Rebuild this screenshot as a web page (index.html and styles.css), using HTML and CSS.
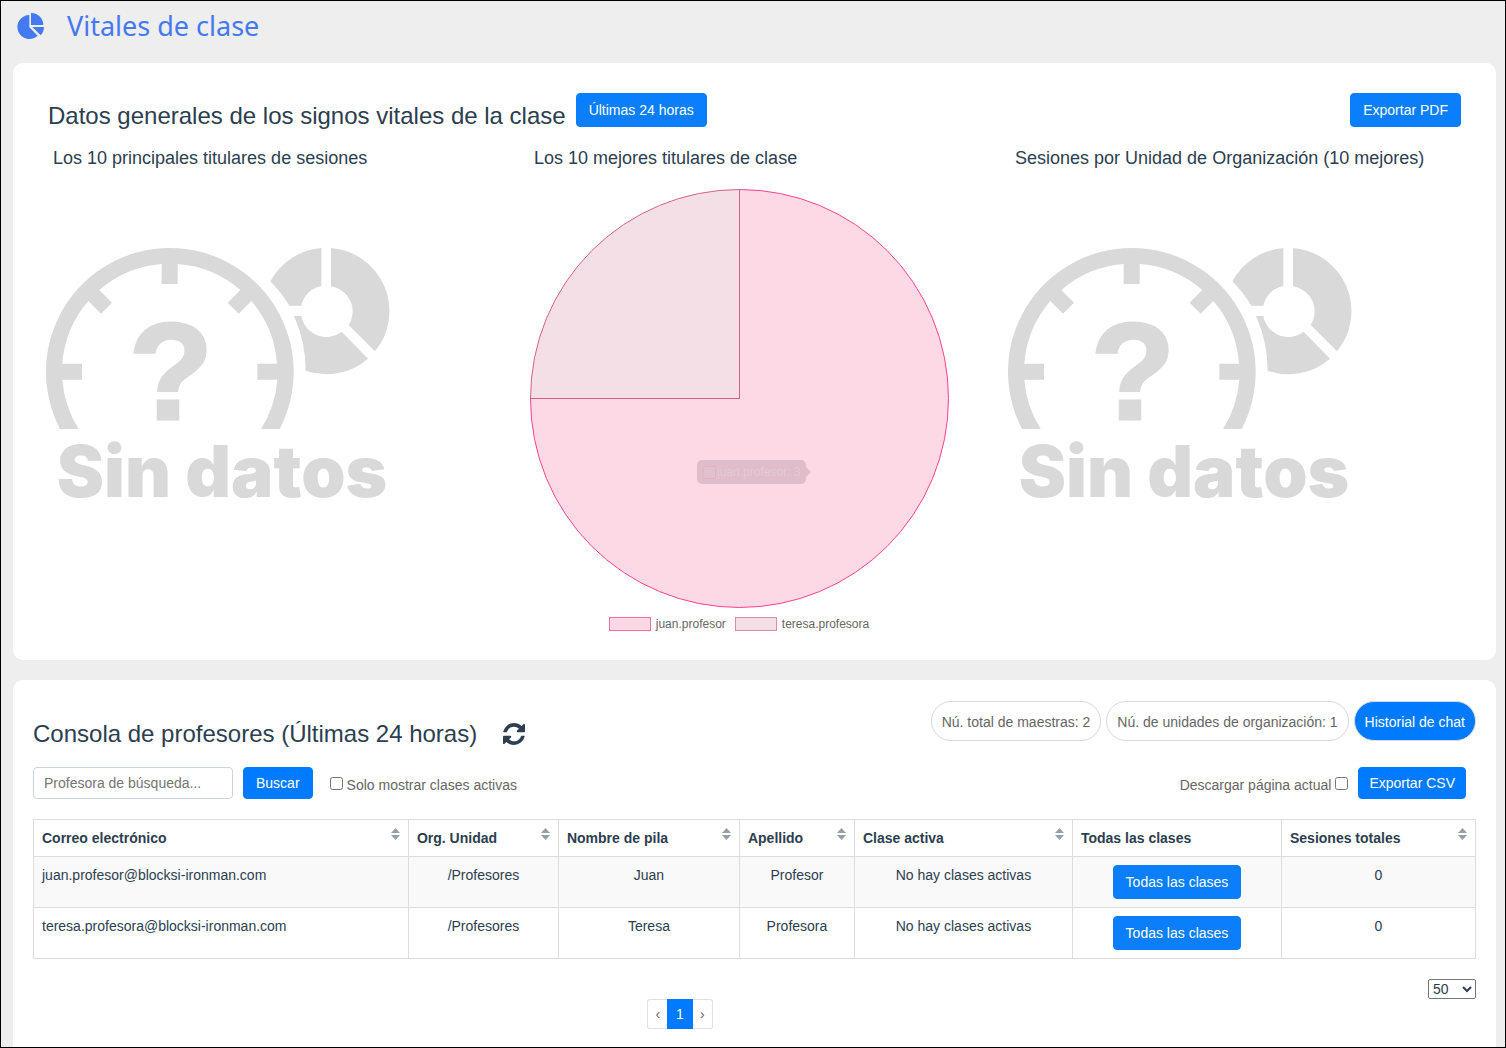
FILE: index.html
```html
<!DOCTYPE html>
<html lang="es">
<head>
<meta charset="utf-8">
<meta name="viewport" content="width=device-width, initial-scale=1">
<title>Vitales de clase</title>
<link rel="stylesheet" href="styles.css">
</head>
<body>
<svg class="defs" aria-hidden="true">
  <symbol id="gauge" viewBox="50 54 1030 750" overflow="visible">
    <path d="M91 597A371.500 371.500 0 1 1 750 597H694A323 323 0 0 0 743 449H683V401H742A323 323 0 0 0 665 213L627 251L594 218L632 180A323 323 0 0 0 444 102V162H396V102A323 323 0 0 0 209 180L247 218L214 251L176 213A323 323 0 0 0 98 401H157V449H98A323 323 0 0 0 147 597Z"/>
    <path d="M904 54A190 190 0 0 1 1036 364L957 285A76 76 0 0 0 904 169Z"/>
    <path d="M875 54V168A76 76 0 0 0 815 227H779Q756 189 722 154A190 190 0 0 1 875 54Z"/>
    <path d="M793 258H815A76 76 0 0 0 936 305L1015 386A190 190 0 0 1 828 422Q828 336 793 258Z"/>
  </symbol>
  <symbol id="sort" viewBox="0 0 9 12">
    <path d="M4.500 0L9 5H0ZM0 7H9L4.500 12Z"/>
  </symbol>
</svg>

<header class="page-header">
  <svg class="logo" viewBox="51 36 81 78" aria-hidden="true">
    <path d="M88 42A36 36 0 1 0 113 104L88 79Z"/>
    <path d="M93 36A36 36 0 0 1 130 72H93Z"/>
    <path d="M97 78H132A36 36 0 0 1 122 103Z"/>
  </svg>
  <h1>Vitales de clase</h1>
</header>

<main>
  <section class="card overview">
    <div class="overview-head">
      <h2>Datos generales de los signos vitales de la clase</h2>
      <button class="btn" type="button">Últimas 24 horas</button>
      <button class="btn push" type="button">Exportar PDF</button>
    </div>
    <div class="charts">
      <article class="chart">
        <h3>Los 10 principales titulares de sesiones</h3>
        <svg class="no-data" viewBox="0 0 344 250">
          <use href="#gauge" width="344" height="250"/>
          <text class="no-data-mark" x="125" y="171" text-anchor="middle">?</text>
          <text class="no-data-text" x="176" y="249" text-anchor="middle">Sin datos</text>
        </svg>
      </article>
      <article class="chart">
        <h3>Los 10 mejores titulares de clase</h3>
        <div class="pie-box">
          <svg class="pie" viewBox="0 0 420 420">
            <path class="slice-a" d="M210.500 210.500V1.500A209 209 0 1 1 1.500 210.500Z"/>
            <path class="slice-b" d="M210.500 210.500H1.500A209 209 0 0 1 210.500 1.500Z"/>
            <path class="tip" d="M173 272H272A5 5 0 0 1 277 277V279L282 284L277 289V291A5 5 0 0 1 272 296H173A5 5 0 0 1 168 291V277A5 5 0 0 1 173 272Z"/>
            <rect class="tip-swatch" x="174.500" y="278.500" width="12" height="12"/>
            <text class="tip-text" x="188" y="288">juan.profesor: 3</text>
          </svg>
          <ul class="legend">
            <li><span class="swatch swatch-a"></span>juan.profesor</li>
            <li><span class="swatch swatch-b"></span>teresa.profesora</li>
          </ul>
        </div>
      </article>
      <article class="chart">
        <h3>Sesiones por Unidad de Organización (10 mejores)</h3>
        <svg class="no-data" viewBox="0 0 344 250">
          <use href="#gauge" width="344" height="250"/>
          <text class="no-data-mark" x="125" y="171" text-anchor="middle">?</text>
          <text class="no-data-text" x="176" y="249" text-anchor="middle">Sin datos</text>
        </svg>
      </article>
    </div>
  </section>

  <section class="card console">
    <div class="console-head">
      <h2>Consola de profesores (Últimas 24 horas)</h2>
      <button class="refresh" type="button" aria-label="Actualizar">
        <svg viewBox="0 0 1536 1536" aria-hidden="true"><path d="M1511 928q0 5-1 7-64 268-268 434.500T764 1536q-146 0-282.500-55T238 1324l-129 129q-19 19-45 19t-45-19-19-45V960q0-26 19-45t45-19h448q26 0 45 19t19 45-19 45l-137 137q71 66 161 102t187 36q134 0 250-65t186-179q11-17 53-117 8-23 30-23h192q13 0 22.500 9.500t9.500 22.500zm25-800v448q0 26-19 45t-45 19h-448q-26 0-45-19t-19-45 19-45l138-138Q969 256 768 256q-134 0-250 65T332 500q-11 17-53 117-8 23-30 23H50q-13 0-22.500-9.500T18 608v-7q65-268 270-434.500T768 0q146 0 284 55.500T1297 212l130-129q19-19 45-19t45 19 19 45z"/></svg>
      </button>
      <div class="pills">
        <span class="pill">Nú. total de maestras: 2</span>
        <span class="pill">Nú. de unidades de organización: 1</span>
        <button class="pill pill-primary" type="button">Historial de chat</button>
      </div>
    </div>

    <form class="tools">
      <input class="search" type="text" placeholder="Profesora de búsqueda..." aria-label="Profesora de búsqueda">
      <button class="btn btn-solid" type="button">Buscar</button>
      <label class="check check-active"><input type="checkbox">Solo mostrar clases activas</label>
      <label class="check push">Descargar página actual<input type="checkbox"></label>
      <button class="btn btn-solid btn-export" type="button">Exportar CSV</button>
    </form>

    <table>
      <colgroup>
        <col class="w-mail"><col class="w-unit"><col class="w-name"><col class="w-last"><col class="w-active"><col class="w-all"><col class="w-total">
      </colgroup>
      <thead>
        <tr>
          <th scope="col"><button class="sort" type="button">Correo electrónico<svg aria-hidden="true"><use href="#sort"/></svg></button></th>
          <th scope="col"><button class="sort" type="button">Org. Unidad<svg aria-hidden="true"><use href="#sort"/></svg></button></th>
          <th scope="col"><button class="sort" type="button">Nombre de pila<svg aria-hidden="true"><use href="#sort"/></svg></button></th>
          <th scope="col"><button class="sort" type="button">Apellido<svg aria-hidden="true"><use href="#sort"/></svg></button></th>
          <th scope="col"><button class="sort" type="button">Clase activa<svg aria-hidden="true"><use href="#sort"/></svg></button></th>
          <th scope="col">Todas las clases</th>
          <th scope="col"><button class="sort" type="button">Sesiones totales<svg aria-hidden="true"><use href="#sort"/></svg></button></th>
        </tr>
      </thead>
      <tbody>
        <tr>
          <td>juan.profesor@blocksi-ironman.com</td><td>/Profesores</td><td>Juan</td><td>Profesor</td><td>No hay clases activas</td>
          <td><button class="btn" type="button">Todas las clases</button></td><td>0</td>
        </tr>
        <tr>
          <td>teresa.profesora@blocksi-ironman.com</td><td>/Profesores</td><td>Teresa</td><td>Profesora</td><td>No hay clases activas</td>
          <td><button class="btn" type="button">Todas las clases</button></td><td>0</td>
        </tr>
      </tbody>
    </table>

    <div class="table-foot">
      <nav class="pager" aria-label="Paginación">
        <a href="#">‹</a><a class="current" href="#" aria-current="page">1</a><a href="#">›</a>
      </nav>
      <select class="page-size" aria-label="Filas por página"><option>50</option><option>100</option></select>
    </div>
  </section>
</main>
</body>
</html>
```
FILE: styles.css
```css
* { box-sizing: border-box; }

body {
  margin: 0;
  min-height: 100vh;
  display: flex;
  flex-direction: column;
  border: 1px solid #000;
  background: #eee;
  color: #2c3e50;
  font: 14px/20px "Liberation Sans", Arial, sans-serif;
}

h1, h2, h3 { margin: 0; font-weight: 400; }
h2 { font-size: 24px; line-height: 28px; }
h3 { font-size: 18px; line-height: 22px; }
button, input, select { font: inherit; color: inherit; }

.defs { display: block; width: 0; height: 0; }
.push { margin-left: auto; }

.page-header {
  display: flex;
  align-items: center;
  gap: 23px;
  height: 62px;
  padding: 0 16px 12px;
  color: #4479f1;
}
.page-header h1 { font: 400 27px/36px "Noto Sans", sans-serif; }
.logo { width: 27px; height: 26px; fill: currentColor; }

main {
  flex: 1;
  display: flex;
  flex-direction: column;
  gap: 20px;
  padding: 0 9px 0 12px;
}
.card { background: #fff; border-radius: 10px; }

.btn {
  height: 34px;
  padding: 0 12px;
  border: 1px solid #0a7efb;
  border-radius: 4px;
  background: #0a7efb;
  color: #fff;
}
.btn-solid { height: 32px; border-color: #007bff; background: #007bff; }
.btn-export { padding: 0 10px; }

/* Overview charts */
.overview { padding: 30px 20px 28px; }
.overview-head { display: flex; padding: 0 15px; gap: 10px; }
.overview-head h2 { padding-top: 9px; }
.charts { display: grid; grid-template-columns: repeat(3, 1fr); padding-top: 17px; }
.chart h3 { padding-left: 20px; }
.no-data {
  display: block;
  width: 344px;
  height: 250px;
  margin: 79px 0 0 13px;
  fill: #d9d9d9;
  overflow: visible;
}
.no-data-mark {
  font: 700 138px "Liberation Sans", Arial, sans-serif;
  stroke: #d9d9d9;
  stroke-width: 3px;
}
.no-data-text { font: 900 71px Inter, sans-serif; }

.pie-box { width: 420px; margin: 19px 0 0 15px; }
.pie { display: block; width: 420px; height: 420px; }
.slice-a { fill: #fdd9e6; stroke: #fb4388; }
.slice-b { fill: #f5dfe6; stroke: #d2628a; }
.tip { fill: #dfbdca; }
.tip-swatch { fill: #e2c1ce; stroke: #e5b1c3; }
.tip-text { font-size: 12px; fill: #e6c9d5; }
.legend {
  display: flex;
  justify-content: center;
  gap: 9px;
  margin: 0;
  padding: 8px 0 0;
  list-style: none;
  color: #666;
  font-size: 12px;
  line-height: 16px;
}
.legend li { display: flex; align-items: center; gap: 5px; }
.swatch { width: 42px; height: 14px; border: 1px solid; }
.swatch-a { background: #fdd9e6; border-color: #fb6fa4; }
.swatch-b { background: #f5dfe6; border-color: #dc8ba8; }

/* Teacher console */
.console {
  flex: 1;
  padding: 20px 20px 18px;
  border-radius: 10px 10px 0 0;
}
.console-head { display: flex; align-items: center; }
.console-head h2 { padding-top: 20px; }
.refresh {
  margin: 20px 0 0 26px;
  padding: 0;
  border: 0;
  background: none;
}
.refresh svg { display: block; width: 22px; height: 22px; fill: currentColor; }
.pills { display: flex; gap: 5px; margin-left: auto; align-self: flex-start; padding-top: 1px; }
.pill {
  height: 40px;
  padding: 0 10px;
  border: 1px solid #d9d9d9;
  border-radius: 20px;
  color: #666;
  line-height: 40px;
}
.pill-primary { background: #007bff; color: #fff; }

.tools {
  display: flex;
  align-items: center;
  gap: 10px;
  padding: 19px 10px 20px 0;
}
.search {
  width: 200px;
  height: 32px;
  padding: 0 10px;
  border: 1px solid #ced4da;
  border-radius: 4px;
}
.search::placeholder { color: #757575; }
.check { display: flex; align-items: center; gap: 4px; color: #666; padding-top: 3px; }
.check input { width: 13px; height: 13px; margin: 0 0 3px; }
.check-active { padding-left: 7px; }

table { width: 100%; table-layout: fixed; border-collapse: collapse; }
.w-mail { width: 26%; }
.w-unit { width: 150px; }
.w-name { width: 181px; }
.w-last { width: 115px; }
.w-active { width: 218px; }
.w-all { width: 209px; }
.w-total { width: 194px; }
th, td { padding: 8px; border: 1px solid #ddd; }
th { text-align: left; font-weight: 700; }
td { text-align: center; vertical-align: top; }
td:first-child { text-align: left; }
td .btn { display: block; margin: 0 auto; }
tbody tr:nth-child(odd) { background: #f9f9f9; }
.sort {
  display: flex;
  justify-content: space-between;
  width: 100%;
  padding: 0;
  border: 0;
  background: none;
  text-align: left;
}
.sort svg { width: 9px; height: 12px; fill: #959fa9; }

.table-foot {
  display: grid;
  grid-template-columns: 1fr 48px;
  gap: 101px;
  align-items: start;
  padding-top: 20px;
}
.pager { display: flex; justify-content: center; padding-top: 20px; }
.pager a {
  height: 30px;
  padding: 0 7px;
  border: 1px solid #dee2e6;
  color: #666;
  line-height: 28px;
  text-decoration: none;
}
.pager a:first-child { border-right: 0; border-radius: 3px 0 0 3px; }
.pager a:last-child { border-left: 0; border-radius: 0 3px 3px 0; }
.pager .current { padding: 0 8px; border-color: #007bff; background: #007bff; color: #fff; }
.page-size { width: 48px; height: 20px; padding: 0; background: #fff; border: 1px solid #767676; border-radius: 2px; }
```
